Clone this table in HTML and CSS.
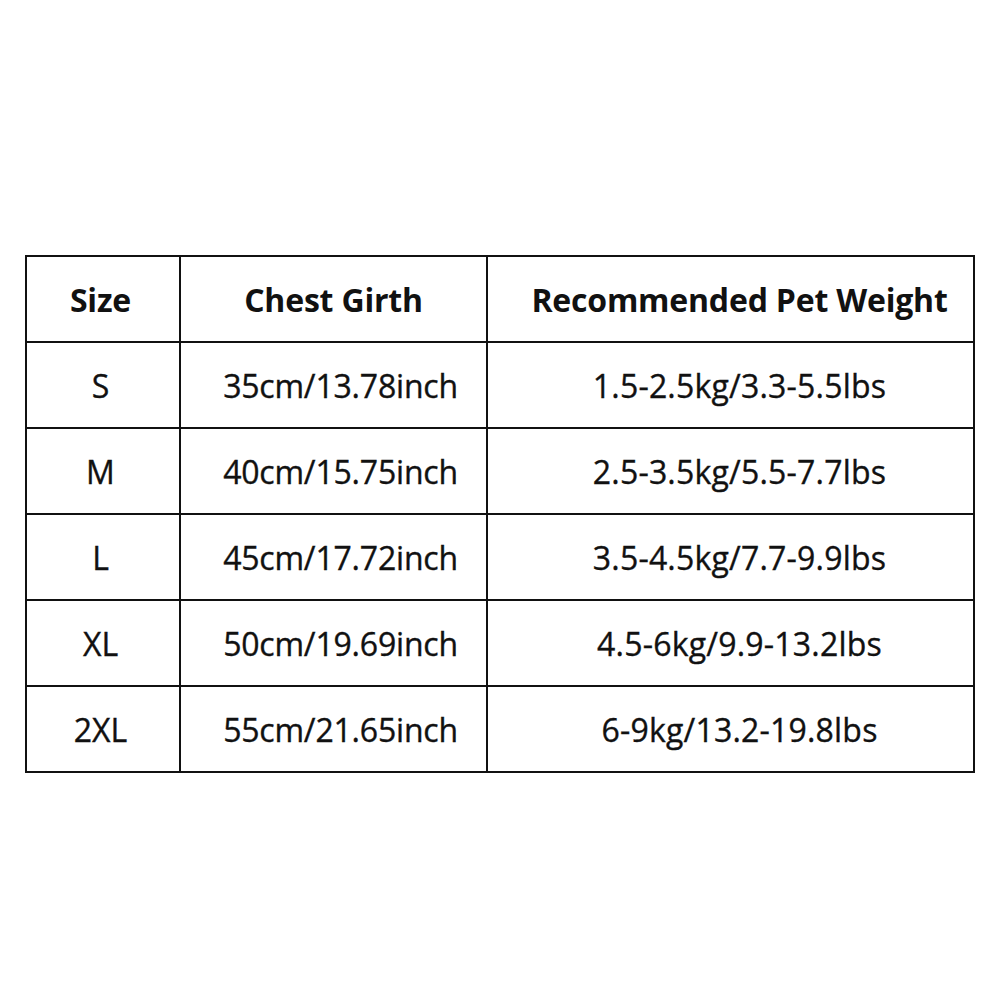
FILE: index.html
```html
<!DOCTYPE html>
<html>
<head>
<meta charset="utf-8">
<link rel="stylesheet" href="styles.css">
</head>
<body>
<div class="page">
<table class="sizes">
  <colgroup>
    <col class="c1">
    <col class="c2">
    <col class="c3">
  </colgroup>
  <thead>
    <tr>
      <th class="sz">Size</th>
      <th>Chest Girth</th>
      <th class="wt">Recommended Pet Weight</th>
    </tr>
  </thead>
  <tbody>
    <tr><td class="sz">S</td><td class="ch">35cm/13.78inch</td><td class="wt">1.5-2.5kg/3.3-5.5lbs</td></tr>
    <tr><td class="sz">M</td><td class="ch">40cm/15.75inch</td><td class="wt">2.5-3.5kg/5.5-7.7lbs</td></tr>
    <tr><td class="sz">L</td><td class="ch">45cm/17.72inch</td><td class="wt">3.5-4.5kg/7.7-9.9lbs</td></tr>
    <tr><td class="sz">XL</td><td class="ch">50cm/19.69inch</td><td class="wt">4.5-6kg/9.9-13.2lbs</td></tr>
    <tr><td class="sz">2XL</td><td class="ch">55cm/21.65inch</td><td class="wt">6-9kg/13.2-19.8lbs</td></tr>
  </tbody>
</table>
</div>
</body>
</html>
```

FILE: styles.css
```css
html, body {
  margin: 0;
  padding: 0;
  background: #ffffff;
}
.page {
  width: 1000px;
  height: 1000px;
  padding: 255px 0 0 25px;
  box-sizing: border-box;
  font-family: "Open Sans", "Noto Sans", sans-serif;
  color: #111111;
}
.sizes {
  border-collapse: collapse;
  table-layout: fixed;
  width: 948px;
}
.c1 { width: 154px; }
.c2 { width: 307px; }
.c3 { width: 487px; }
.sizes th, .sizes td {
  border: 2px solid #111111;
  height: 84px;
  padding: 0;
  text-align: center;
  vertical-align: middle;
  white-space: nowrap;
  overflow: visible;
}
.sizes th {
  font-size: 32px;
  font-weight: 700;
  letter-spacing: -0.2px;
}
.sizes td {
  font-size: 32px;
  font-weight: 400;
  -webkit-text-stroke: 0.35px #111111;
}
.sizes .sz { padding-right: 5px; }
.sizes td.ch { padding-left: 14px; letter-spacing: -0.2px; }
.sizes td.wt { letter-spacing: 0.2px; }
.sizes .wt { padding-left: 18px; }
```
